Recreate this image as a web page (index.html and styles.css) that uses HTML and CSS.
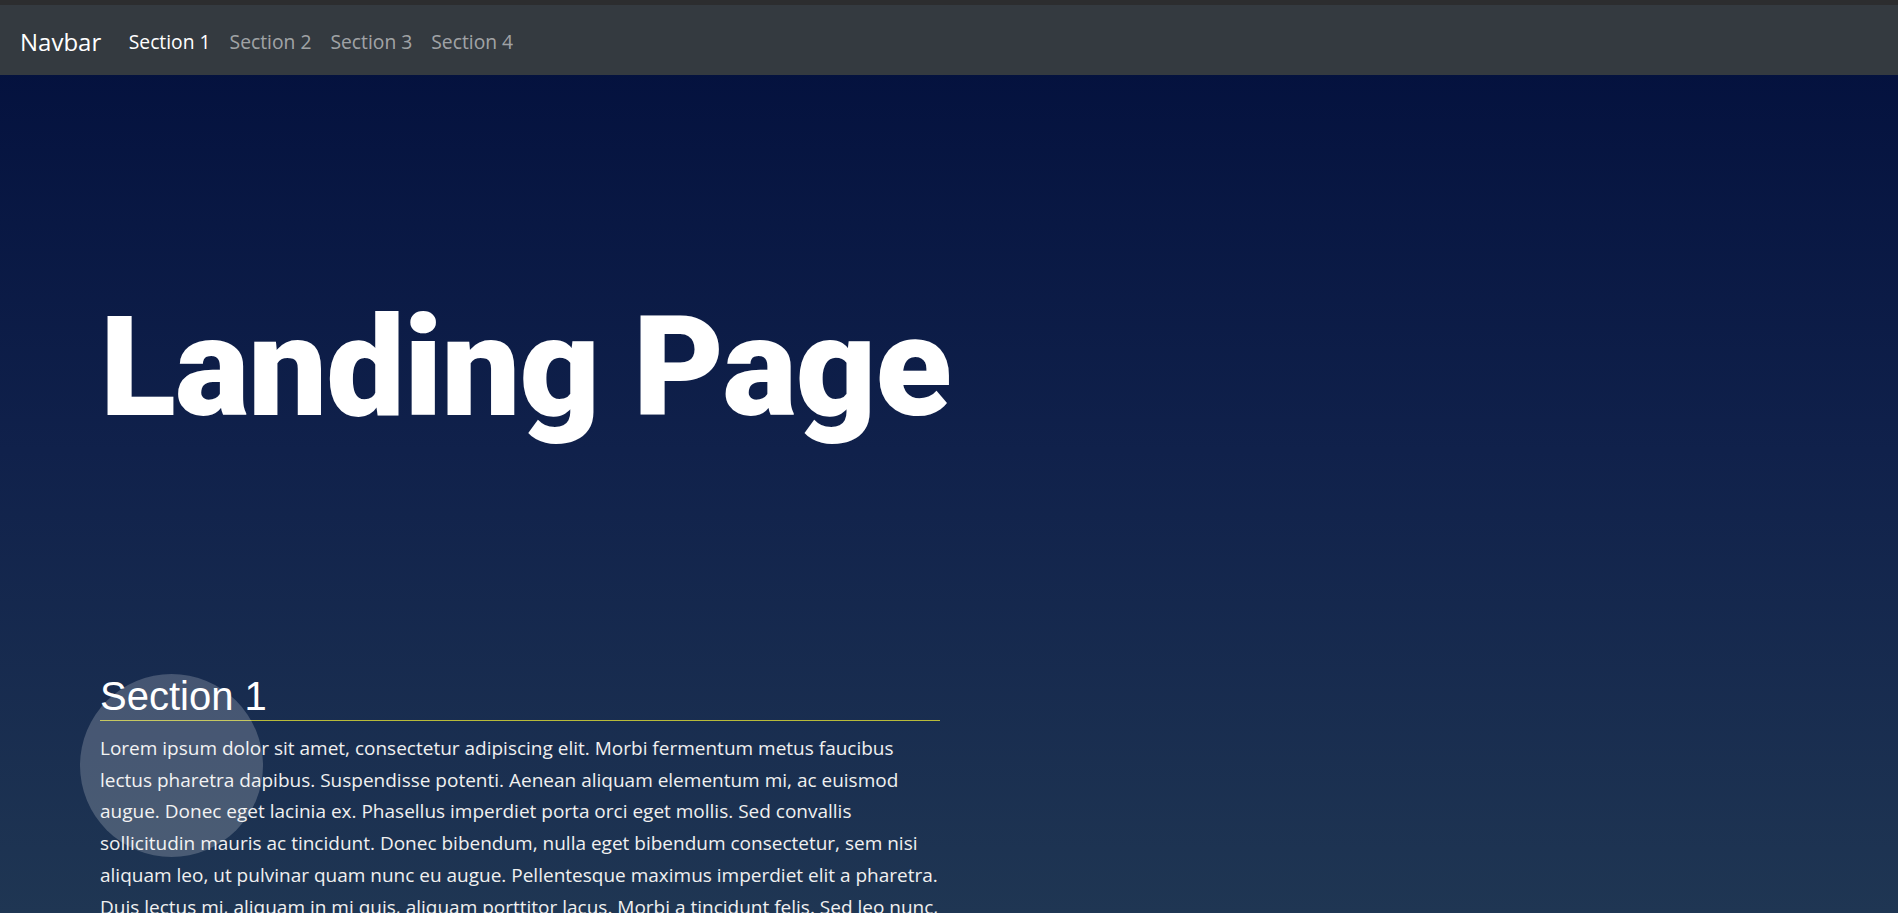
FILE: index.html
```html
<!DOCTYPE html>
<html lang="en">
<head>
<meta charset="utf-8">
<title>Landing Page</title>
<link rel="stylesheet" href="styles.css">
</head>
<body>
<div class="topstrip"></div>
<nav class="navbar">
  <a class="brand" href="#">Navbar</a>
  <ul class="nav-links">
    <li><a class="nav-link active" href="#s1">Section 1</a></li>
    <li><a class="nav-link" href="#s2">Section 2</a></li>
    <li><a class="nav-link" href="#s3">Section 3</a></li>
    <li><a class="nav-link" href="#s4">Section 4</a></li>
  </ul>
</nav>
<main class="page">
  <header class="hero">
    <h1 class="hero-title">Landing Page</h1>
  </header>
  <section class="section" id="s1">
    <h2 class="section-title">Section 1</h2>
    <p class="section-text">Lorem ipsum dolor sit amet, consectetur adipiscing elit. Morbi fermentum metus faucibus lectus pharetra dapibus. Suspendisse potenti. Aenean aliquam elementum mi, ac euismod augue. Donec eget lacinia ex. Phasellus imperdiet porta orci eget mollis. Sed convallis sollicitudin mauris ac tincidunt. Donec bibendum, nulla eget bibendum consectetur, sem nisi aliquam leo, ut pulvinar quam nunc eu augue. Pellentesque maximus imperdiet elit a pharetra. Duis lectus mi, aliquam in mi quis, aliquam porttitor lacus. Morbi a tincidunt felis. Sed leo nunc, pharetra et elementum non, faucibus vitae elit. Integer nec libero venenatis libero ultricies molestie semper in dolor.</p>
  </section>
</main>
<div class="cursor-glow"></div>
</body>
</html>
```
FILE: styles.css
```css
html, body {
  margin: 0;
  padding: 0;
  height: 100%;
  overflow: hidden;
}
body {
  background: linear-gradient(180deg, #020f3c 0px, #10214b 450px, #1f3653 913px);
  font-family: "Open Sans", "Noto Sans", sans-serif;
  color: #fff;
  position: relative;
}
.topstrip {
  height: 5px;
  background: #2c2d2f;
}
.navbar {
  height: 70px;
  box-sizing: border-box;
  padding-top: 2px;
  background: #343a40;
  display: flex;
  align-items: center;
  padding-left: 20px;
}
.brand {
  font-size: 24px;
  color: #fff;
  text-decoration: none;
  margin-right: 18px;
}
.nav-links {
  list-style: none;
  display: flex;
  margin: 0;
  padding: 0;
}
.nav-link {
  display: block;
  padding: 0 9.5px;
  font-size: 19.3px;
  color: rgba(255, 255, 255, 0.55);
  text-decoration: none;
}
.nav-link.active {
  color: #fff;
}
.page {
  padding-left: 100px;
  width: 840px;
}
.hero {
  padding-top: 222px;
  height: 597px;
  box-sizing: border-box;
}
.hero-title {
  margin: 0;
  font-family: Roboto, sans-serif;
  font-weight: 900;
  font-size: 140px;
  line-height: 1;
  letter-spacing: -1px;
  white-space: nowrap;
}
.section-title {
  margin: 0;
  font-family: "Liberation Sans", Arial, sans-serif;
  font-weight: 400;
  font-size: 40px;
  line-height: 48px;
  border-bottom: 1px solid #b9bb3a;
}
.section-text {
  margin: 12px 0 0;
  font-size: 19px;
  line-height: 31.7px;
  color: #f0f0f0;
}
.cursor-glow {
  position: absolute;
  left: 80px;
  top: 674px;
  width: 183px;
  height: 183px;
  border-radius: 50%;
  background: rgba(255, 255, 255, 0.2);
  pointer-events: none;
}
```
